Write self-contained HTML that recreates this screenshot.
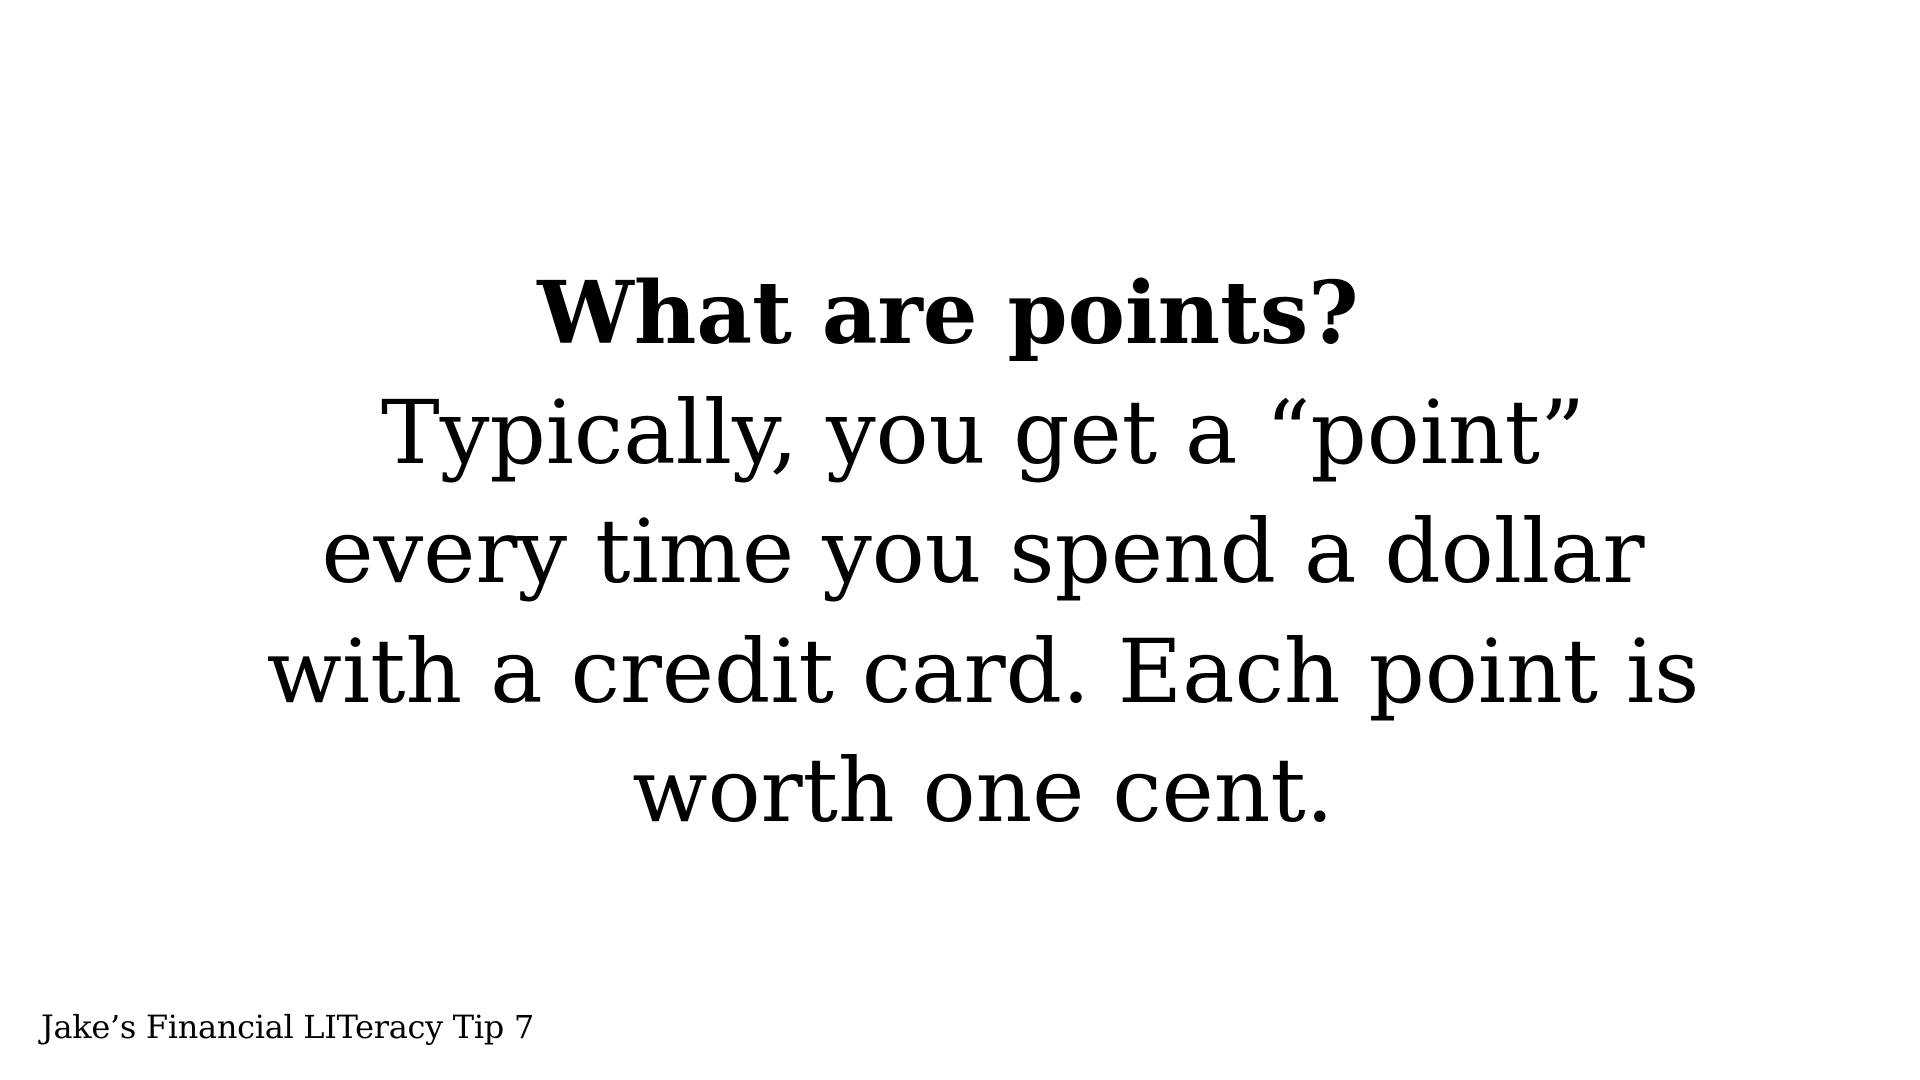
<!DOCTYPE html>
<html><head><meta charset="utf-8"><style>
html,body{margin:0;padding:0;background:#fff;width:1920px;height:1080px;overflow:hidden}
.l{position:absolute;left:0;width:1966px;text-align:center;font-family:"DejaVu Serif","Liberation Serif",serif;color:#000;white-space:nowrap;line-height:1}
.t{font-weight:bold;font-size:86px;top:271px;width:1896px}
.b{font-size:88px}
.f{position:absolute;left:41px;top:1008px;font-family:"DejaVu Serif",serif;font-size:32px;white-space:nowrap;letter-spacing:-0.3px}
</style></head><body>
<div class="l t">What are points?</div>
<div class="l b" style="top:389px">Typically, you get a “point”</div>
<div class="l b" style="top:508px">every time you spend a dollar</div>
<div class="l b" style="top:628px">with a credit card. Each point is</div>
<div class="l b" style="top:747px">worth one cent.</div>
<div class="f">Jake’s Financial LITeracy Tip 7</div>
</body></html>
